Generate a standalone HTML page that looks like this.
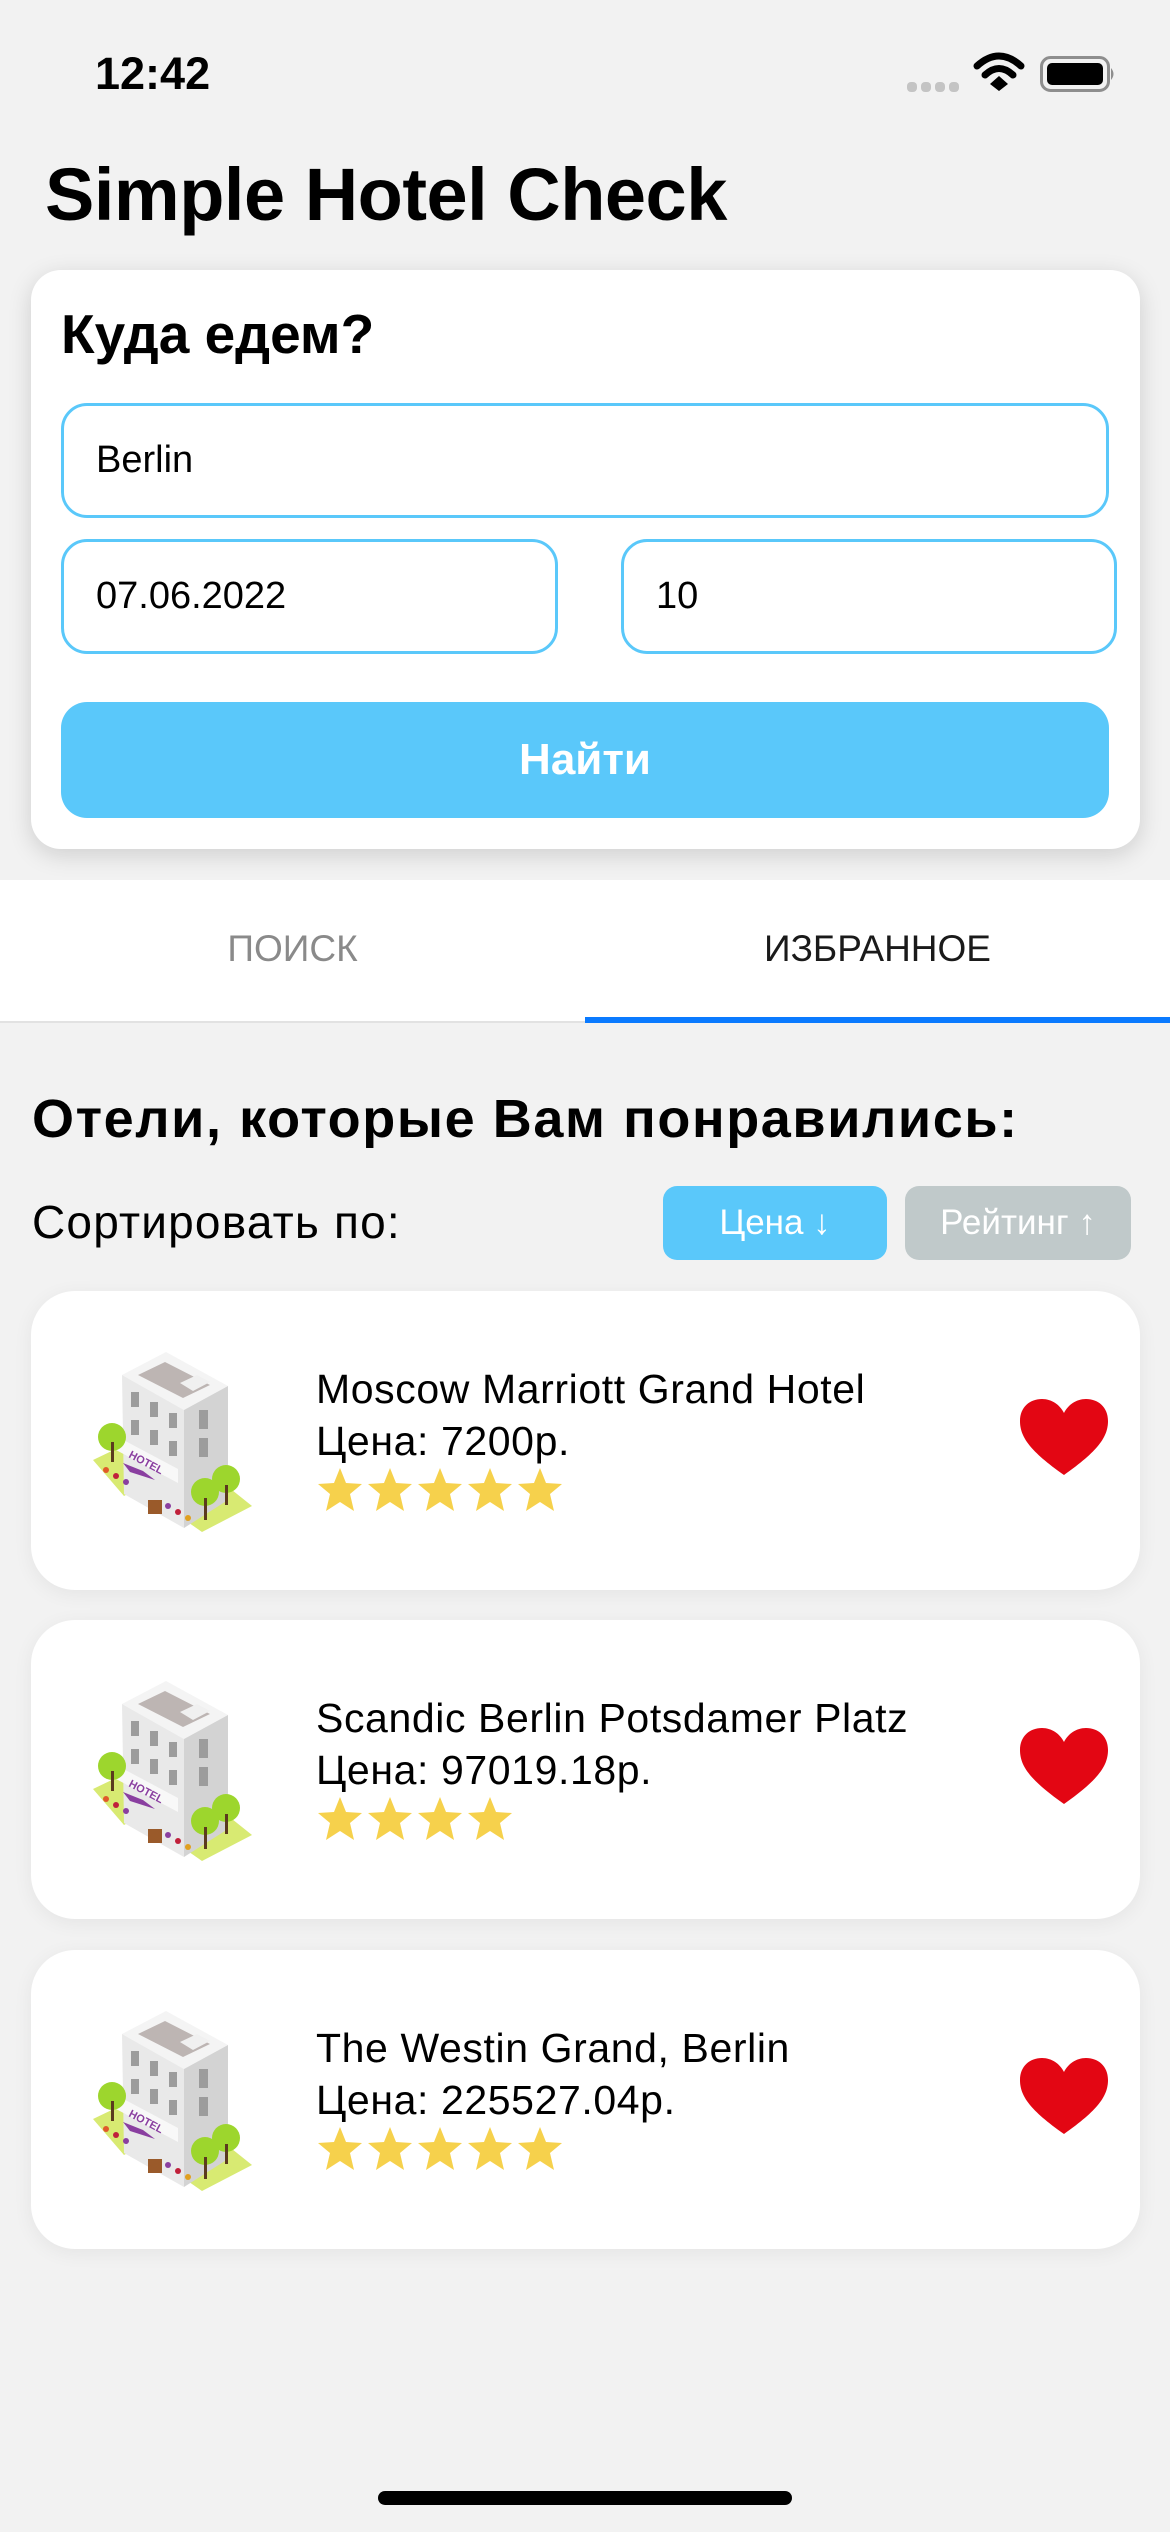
<!DOCTYPE html>
<html><head><meta charset="utf-8">
<style>
*{margin:0;padding:0;box-sizing:border-box}
body{width:1170px;height:2532px;background:#f2f2f2;position:relative;overflow:hidden;font-family:"Liberation Sans","Noto Sans CJK SC",sans-serif;color:#000}
.a{position:absolute}
.card{position:absolute;background:#fff;border-radius:30px;box-shadow:0 6px 24px rgba(0,0,0,0.15)}
.inp{position:absolute;border:3px solid #5ac8fa;border-radius:26px;background:#fff;font-size:38px;padding-left:32px;display:flex;align-items:center}
.hc{position:absolute;left:31px;width:1109px;height:299px;background:#fff;border-radius:44px;box-shadow:0 4px 20px rgba(0,0,0,0.06)}
.hc .t{position:absolute;left:285px;font-size:41px;line-height:52px;letter-spacing:0.6px}
.stars{position:absolute;left:286px;top:176px}
.heart{position:absolute;left:989px;top:108px}
</style></head><body>
<div class="a" style="left:95px;top:48px;font-size:45px;font-weight:bold;">12:42</div>
<svg class="a" style="left:900px;top:50px" width="220" height="50" viewBox="900 50 220 50">
<rect x="907" y="82" width="10" height="10" rx="4" fill="#c4c4c4"/><rect x="921" y="82" width="10" height="10" rx="4" fill="#c4c4c4"/><rect x="935" y="82" width="10" height="10" rx="4" fill="#c4c4c4"/><rect x="949" y="82" width="10" height="10" rx="4" fill="#c4c4c4"/>
<path d="M977 66 Q999 46 1021 66" stroke="#000" stroke-width="7" fill="none" stroke-linecap="round"/>
<path d="M985 75 Q999 62 1013 75" stroke="#000" stroke-width="7" fill="none" stroke-linecap="round"/>
<path d="M990 84 L999 76 L1008 84 L999 91 Z" fill="#000"/>
<rect x="1041.5" y="57.5" width="67" height="33" rx="9" fill="none" stroke="#8e8e8e" stroke-width="3"/>
<rect x="1047" y="63" width="56" height="22" rx="5" fill="#000"/>
<path d="M1111 68 Q1116 74 1111 80 Z" fill="#8e8e8e"/>
</svg>
<div class="a" style="left:45px;top:152px;font-size:74px;font-weight:bold;letter-spacing:-0.5px">Simple Hotel Check</div>

<div class="card" style="left:31px;top:270px;width:1109px;height:579px"></div>
<div class="a" style="left:61px;top:302px;font-size:55px;font-weight:bold">Куда едем?</div>
<div class="inp" style="left:61px;top:403px;width:1048px;height:115px">Berlin</div>
<div class="inp" style="left:61px;top:539px;width:497px;height:115px">07.06.2022</div>
<div class="inp" style="left:621px;top:539px;width:496px;height:115px">10</div>
<div class="a" style="left:61px;top:702px;width:1048px;height:116px;background:#5ac8fa;border-radius:26px;color:#fff;font-size:44px;font-weight:bold;display:flex;align-items:center;justify-content:center">Найти</div>

<div class="a" style="left:0;top:880px;width:1170px;height:143px;background:#fff;border-bottom:2px solid #e2e2e2"></div>
<div class="a" style="left:0;top:928px;width:585px;text-align:center;font-size:37px;color:#8a8a8a">ПОИСК</div>
<div class="a" style="left:585px;top:928px;width:585px;text-align:center;font-size:37px;color:#1a1a1a">ИЗБРАННОЕ</div>
<div class="a" style="left:585px;top:1017px;width:585px;height:6px;background:#0a7aff"></div>

<div class="a" style="left:32px;top:1088px;font-size:54px;font-weight:bold;letter-spacing:1.6px">Отели, которые Вам понравились:</div>
<div class="a" style="left:32px;top:1195px;font-size:46px;letter-spacing:1.2px">Сортировать по:</div>
<div class="a" style="left:663px;top:1186px;width:224px;height:74px;background:#5ac8fa;border-radius:14px;color:#fff;font-size:35px;display:flex;align-items:center;justify-content:center">Цена ↓</div>
<div class="a" style="left:905px;top:1186px;width:226px;height:74px;background:#c0c9ca;border-radius:14px;color:#fff;font-size:35px;display:flex;align-items:center;justify-content:center">Рейтинг ↑</div>

<svg width="0" height="0" style="position:absolute">
<defs>
<g id="hotel">
<polygon points="33,130 58,118 92,150 64,166" fill="#d8ea72"/>
<polygon points="122,188 172,160 192,176 142,202" fill="#d8ea72"/>
<polygon points="62,45 106,22 168,56 124,80" fill="#f4f4f4"/>
<polygon points="78,45 105,32 150,55 123,68" fill="#bdb5b3"/>
<polygon points="120,53 137,45 150,52 133,61" fill="#f0f0f0"/>
<polygon points="62,45 124,80 124,198 64,164" fill="#e9e9e9"/>
<polygon points="124,80 168,56 168,170 124,198" fill="#d3d3d3"/>
<g fill="#9c9c9c">
<rect x="71" y="62" width="8" height="15"/><rect x="90" y="72" width="8" height="15"/><rect x="109" y="83" width="8" height="15"/>
<rect x="71" y="90" width="8" height="15"/><rect x="90" y="100" width="8" height="15"/><rect x="109" y="111" width="8" height="15"/>
<rect x="139" y="80" width="9" height="19"/><rect x="139" y="108" width="9" height="19"/>
</g>
<polygon points="56,106 118,139 118,153 56,120" fill="#f8f8f8"/>
<text x="68" y="127" font-size="11" font-weight="bold" fill="#8a3fa0" transform="rotate(28 68 127)" font-family="Liberation Sans,sans-serif">HOTEL</text>
<polygon points="63,133 83,141 95,150 70,142" fill="#8a3fa0"/>
<circle cx="52" cy="107" r="14" fill="#9dd62d"/><rect x="51" y="112" width="3" height="20" fill="#5b3a1e"/>
<circle cx="145" cy="162" r="14" fill="#9dd62d"/><rect x="144" y="168" width="3" height="22" fill="#5b3a1e"/>
<circle cx="166" cy="149" r="14" fill="#9dd62d"/><rect x="165" y="155" width="3" height="20" fill="#5b3a1e"/>
<rect x="88" y="170" width="14" height="14" fill="#9a5a2a"/>
<circle cx="46" cy="140" r="3" fill="#e05a2a"/><circle cx="56" cy="146" r="3" fill="#c0203a"/><circle cx="66" cy="152" r="3" fill="#8a3fa0"/>
<circle cx="108" cy="176" r="3" fill="#8a3fa0"/><circle cx="118" cy="182" r="3" fill="#c0203a"/><circle cx="128" cy="188" r="3" fill="#e0a020"/>
</g>
<path id="hrt" d="M44 76 C10 52 0 38 0 22 C0 8 10 0 22 0 C32 0 40 6 44 14 C48 6 56 0 66 0 C78 0 88 8 88 22 C88 38 78 52 44 76 Z"/>
<path id="st" d="M23 1 L29 16 L45 17 L33 27 L37 44 L23 35 L9 44 L13 27 L1 17 L17 16 Z" fill="#f6d14c"/>
</defs></svg>

<div class="hc" style="top:1291px">
<svg class="a" style="left:29px;top:39px" width="220" height="220" viewBox="0 0 220 220"><use href="#hotel"/></svg>
<div class="t" style="top:72px">Moscow Marriott Grand Hotel</div>
<div class="t" style="top:124px">Цена: 7200р.</div>
<svg class="stars" width="250" height="46"><use href="#st"/><use href="#st" x="50"/><use href="#st" x="100"/><use href="#st" x="150"/><use href="#st" x="200"/></svg>
<svg class="heart" width="88" height="78" viewBox="0 0 88 78"><use href="#hrt" fill="#e30613"/></svg>
</div>
<div class="hc" style="top:1620px">
<svg class="a" style="left:29px;top:39px" width="220" height="220" viewBox="0 0 220 220"><use href="#hotel"/></svg>
<div class="t" style="top:72px">Scandic Berlin Potsdamer Platz</div>
<div class="t" style="top:124px">Цена: 97019.18р.</div>
<svg class="stars" width="250" height="46"><use href="#st"/><use href="#st" x="50"/><use href="#st" x="100"/><use href="#st" x="150"/></svg>
<svg class="heart" width="88" height="78" viewBox="0 0 88 78"><use href="#hrt" fill="#e30613"/></svg>
</div>
<div class="hc" style="top:1950px">
<svg class="a" style="left:29px;top:39px" width="220" height="220" viewBox="0 0 220 220"><use href="#hotel"/></svg>
<div class="t" style="top:72px">The Westin Grand, Berlin</div>
<div class="t" style="top:124px">Цена: 225527.04р.</div>
<svg class="stars" width="250" height="46"><use href="#st"/><use href="#st" x="50"/><use href="#st" x="100"/><use href="#st" x="150"/><use href="#st" x="200"/></svg>
<svg class="heart" width="88" height="78" viewBox="0 0 88 78"><use href="#hrt" fill="#e30613"/></svg>
</div>

<div class="a" style="left:378px;top:2491px;width:414px;height:14px;border-radius:7px;background:#000"></div>
</body></html>
